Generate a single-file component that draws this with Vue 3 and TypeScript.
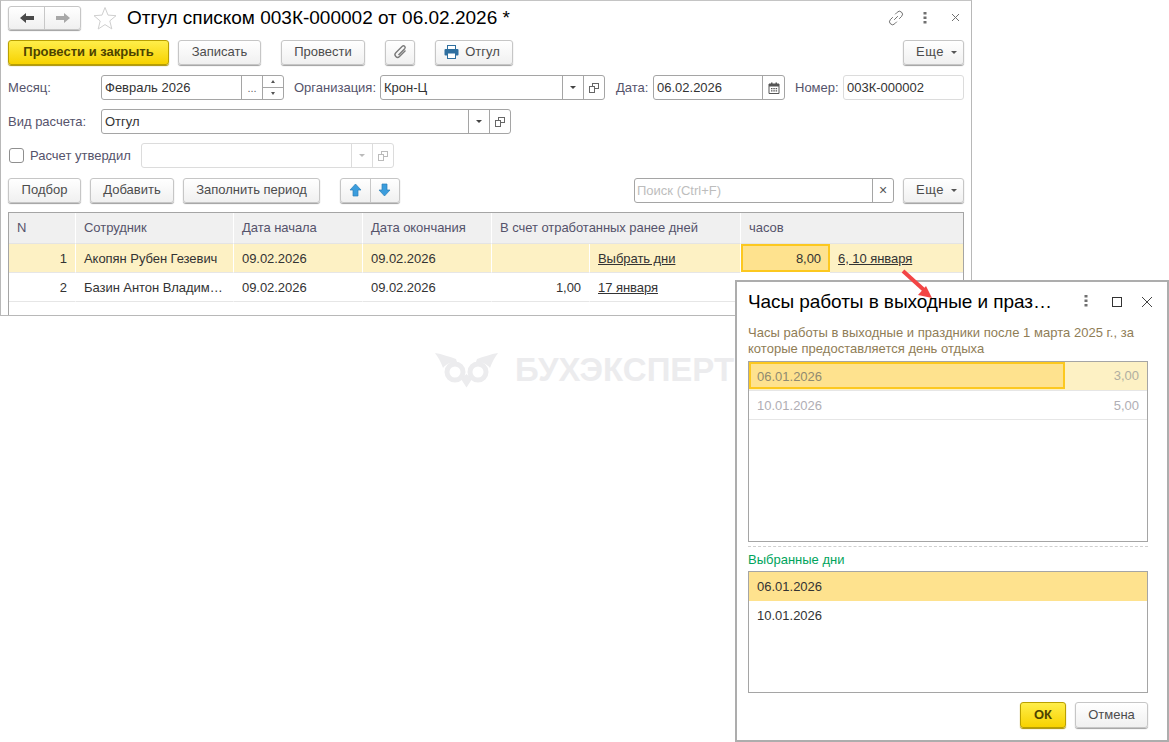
<script setup lang="ts">
const columns = ['N', 'Сотрудник', 'Дата начала', 'Дата окончания']
</script>

<template>
  <div class="page">
    <section class="win">
      <header class="titlebar">
        <div class="btn nav">
          <span class="navcell">
            <svg width="16" height="12" viewBox="0 0 16 12"><path d="M1 6l6-5v3h8v4H7v3z" fill="#4a4a4a" /></svg>
          </span>
          <span class="navcell">
            <svg width="16" height="12" viewBox="0 0 16 12"><path d="M15 6L9 1v3H1v4h8v3z" fill="#a8a8a8" /></svg>
          </span>
        </div>
        <svg class="star" width="24" height="24" viewBox="0 0 24 24"><path d="M12 1.5l3 7.600 8 .6-6.200 5.200 2 8L12 18.600 5.200 23l2-8L1 9.700l8-.6z" fill="#fff" stroke="#cfcfcf" /></svg>
        <h1 class="title">Отгул списком 003К-000002 от 06.02.2026 *</h1>
        <div class="winicons">
          <svg class="ic-link" width="16" height="16" viewBox="0 0 16 16" fill="none" stroke="#707070" stroke-width="1"><path d="M6.200 9.800l3.600-3.600M7.200 4.300l2-2a3 3 0 0 1 4.500 4l-2.500 2.500M8.800 11.700l-2 2a3 3 0 0 1-4.500-4l2.500-2.500" /></svg>
          <svg class="ic-dots" width="4" height="12" viewBox="0 0 4 12" fill="#707070"><rect x="0.500" y="0" width="3" height="2.500" /><rect x="0.500" y="4.500" width="3" height="2.500" /><rect x="0.500" y="9" width="3" height="2.500" /></svg>
          <svg width="9" height="9" viewBox="0 0 9 9" stroke="#707070" fill="none"><path d="M1 1l7 7M8 1L1 8" /></svg>
        </div>
      </header>

      <div class="row toolbar">
        <button class="btn primary w161">Провести и закрыть</button>
        <button class="btn w83 ml9">Записать</button>
        <button class="btn w84 ml20">Провести</button>
        <button class="btn w30 ml20">
          <svg width="16" height="16" viewBox="0 0 16 16" fill="none" stroke="#7a7a7a" stroke-width="1.400"><path d="M13.500 6.500l-6 6a2.600 2.600 0 0 1-3.700-3.700l6.500-6.500a1.700 1.700 0 0 1 2.400 2.400L6.500 11" /></svg>
        </button>
        <button class="btn w78 ml20 gap7">
          <svg width="15" height="14" viewBox="0 0 15 14"><rect x="3.500" y="0.500" width="8" height="4" fill="#fff" stroke="#2f6f9f" /><rect x="0.500" y="4" width="14" height="6.500" rx="1" fill="#2f6f9f" /><rect x="3.500" y="8" width="8" height="5.500" fill="#fff" stroke="#2f6f9f" /></svg>
          <span>Отгул</span>
        </button>
        <button class="btn w61 more push">Еще <i class="caret"></i></button>
      </div>

      <div class="row fields">
        <label class="lbl w93">Месяц:</label>
        <div class="field w183">
          <span class="val">Февраль 2026</span>
          <span class="fb w21 dots">...</span>
          <span class="fb w21 spin"><i class="up"></i><i class="down"></i></span>
        </div>
        <label class="lbl ml10 w86">Организация:</label>
        <div class="field w225">
          <span class="val">Крон-Ц</span>
          <span class="fb w21"><i class="caret dark"></i></span>
          <span class="fb w21"><svg width="10" height="10" viewBox="0 0 10 10" fill="#fff" stroke="#666"><rect x="3.500" y="0.500" width="6" height="5" /><rect x="0.500" y="3.500" width="5" height="6" /></svg></span>
        </div>
        <label class="lbl ml11 w37">Дата:</label>
        <div class="field w132">
          <span class="val">06.02.2026</span>
          <span class="fb w22">
            <svg width="12" height="12" viewBox="0 0 12 12"><path d="M1 2h10v9.500H1z" fill="#fff" stroke="#555" /><path d="M1 2h10v2.500H1zM3 .5h1.500v2H3zM7.500.5H9v2H7.500z" fill="#555" /><path d="M3 6h1.500v1.300H3zM5.300 6h1.500v1.300H5.300zM7.600 6h1.500v1.300H7.600zM3 8.300h1.500v1.300H3zM5.300 8.300h1.500v1.300H5.300zM7.600 8.300h1.500v1.300H7.600z" fill="#555" /></svg>
          </span>
        </div>
        <label class="lbl ml10 w48">Номер:</label>
        <div class="field w121 soft"><span class="val">003К-000002</span></div>
      </div>

      <div class="row fields second">
        <label class="lbl w93">Вид расчета:</label>
        <div class="field w410">
          <span class="val">Отгул</span>
          <span class="fb w21"><i class="caret dark"></i></span>
          <span class="fb w21"><svg width="10" height="10" viewBox="0 0 10 10" fill="#fff" stroke="#666"><rect x="3.500" y="0.500" width="6" height="5" /><rect x="0.500" y="3.500" width="5" height="6" /></svg></span>
        </div>
      </div>

      <div class="row fields second">
        <span class="check"></span>
        <label class="lbl w111">Расчет утвердил</label>
        <div class="field w253 soft">
          <span class="val"></span>
          <span class="fb w21"><i class="caret faded"></i></span>
          <span class="fb w21"><svg width="10" height="10" viewBox="0 0 10 10" fill="#fff" stroke="#bbb"><rect x="3.500" y="0.500" width="6" height="5" /><rect x="0.500" y="3.500" width="5" height="6" /></svg></span>
        </div>
      </div>

      <div class="row actions">
        <button class="btn w73">Подбор</button>
        <button class="btn w84 ml9">Добавить</button>
        <button class="btn w137 ml9">Заполнить период</button>
        <div class="btn arrows ml20">
          <span class="navcell">
            <svg width="13" height="14" viewBox="0 0 13 14"><path d="M6.500 1L12 7H9v6H4V7H1z" fill="#3b9ddd" stroke="#2d7fb8" stroke-width=".7" /></svg>
          </span>
          <span class="navcell">
            <svg width="13" height="14" viewBox="0 0 13 14"><path d="M6.500 13L12 7H9V1H4v6H1z" fill="#3b9ddd" stroke="#2d7fb8" stroke-width=".7" /></svg>
          </span>
        </div>
        <div class="field search">
          <span class="val ph">Поиск (Ctrl+F)</span>
          <span class="fb w21 close">×</span>
        </div>
        <button class="btn w61 more ml9">Еще <i class="caret"></i></button>
      </div>

      <div class="table">
        <div v-for="c in columns" :key="c" class="th">{{ c }}</div>
        <div class="th span2">В счет отработанных ранее дней</div>
        <div class="th span2 end">часов</div>

        <div class="td sel num">1</div>
        <div class="td sel">Акопян Рубен Гезевич</div>
        <div class="td sel date">09.02.2026</div>
        <div class="td sel date">09.02.2026</div>
        <div class="td sel"></div>
        <div class="td sel"><a>Выбрать дни</a></div>
        <div class="td active num">8,00</div>
        <div class="td sel end"><a>6, 10 января</a></div>

        <div class="td num">2</div>
        <div class="td clip">Базин Антон Владим…</div>
        <div class="td date">09.02.2026</div>
        <div class="td date">09.02.2026</div>
        <div class="td num">1,00</div>
        <div class="td"><a>17 января</a></div>
        <div class="td"></div>
        <div class="td end"></div>
      </div>
    </section>

    <div class="mark">
      <svg width="64" height="36" viewBox="0 0 64 36">
        <path d="M0 1c7 1 15 4 21 6l1 3c-6 0-11 2-14 6C6 10 3 5 0 1zM63 1c-7 1-15 4-21 6l-1 3c6 0 11 2 14 6 2-6 5-11 8-15z" fill="#ececee" />
        <circle cx="20" cy="20" r="8" fill="none" stroke="#ececee" stroke-width="5" />
        <circle cx="43" cy="20" r="8" fill="none" stroke="#ececee" stroke-width="5" />
        <path d="M26 27l5.500-5 5.500 5-5.500 8.500z" fill="#ececee" />
      </svg>
      <span>БУХЭКСПЕРТ</span>
    </div>

    <section class="dialog">
      <header class="dhead">
        <h2>Часы работы в выходные и праз…</h2>
        <svg class="i1" width="4" height="12" viewBox="0 0 4 12" fill="#707070"><rect x="0.500" y="0" width="3" height="2.500" /><rect x="0.500" y="4.500" width="3" height="2.500" /><rect x="0.500" y="9" width="3" height="2.500" /></svg>
        <svg class="i2" width="10" height="10" viewBox="0 0 10 10" fill="none" stroke="#333"><rect x="0.500" y="0.500" width="9" height="9" /></svg>
        <svg class="i3" width="12" height="12" viewBox="0 0 12 12" fill="none" stroke="#444"><path d="M1 1l10 10M11 1L1 11" /></svg>
      </header>
      <p class="hint">Часы работы в выходные и праздники после 1 марта 2025 г., за которые предоставляется день отдыха</p>
      <div class="list top">
        <div class="lrow first">
          <span class="cell-sel">06.01.2026</span>
          <span class="amount">3,00</span>
        </div>
        <div class="lrow">
          <span class="cell-plain">10.01.2026</span>
          <span class="amount">5,00</span>
        </div>
      </div>
      <div class="dash"></div>
      <div class="green">Выбранные дни</div>
      <div class="list bottom">
        <div class="brow picked">06.01.2026</div>
        <div class="brow">10.01.2026</div>
      </div>
      <div class="dfoot">
        <button class="btn primary w46">ОК</button>
        <button class="btn w73 ml9">Отмена</button>
      </div>
    </section>

    <svg class="arrow" width="40" height="36" viewBox="0 0 40 36">
      <path d="M4 4l21 19" stroke="#f24545" stroke-width="4" fill="none" />
      <path d="M33 31l-14-3 8-9z" fill="#f24545" />
    </svg>
  </div>
</template>

<style>
html, body { margin: 0; background: #fff; }
</style>

<style scoped>
.page {
  position: relative;
  width: 1169px;
  height: 742px;
  overflow: hidden;
  background: #fff;
  font: 13px/16px "Liberation Sans", Arial, sans-serif;
  color: #4c4c4c;
}
.win {
  width: 972px;
  height: 316px;
  box-sizing: border-box;
  border: 1px solid #b8b8b8;
  border-top-color: #c4c4c4;
  padding: 0 7px;
  background: #fff;
  display: flex;
  flex-direction: column;
}
.titlebar { display: flex; align-items: center; height: 38px; flex: none; padding-bottom: 5px; box-sizing: border-box; }
.btn.nav { width: 73px; height: 24px; align-items: stretch; }
.navcell { flex: 1; display: flex; align-items: center; justify-content: center; }
.navcell + .navcell { border-left: 1px solid #c8c8c8; }
.star { margin-left: 12px; }
.title { margin: 0 0 0 10px; font: 400 19px/24px "Liberation Sans", Arial, sans-serif; color: #000; white-space: nowrap; }
.winicons { margin-left: auto; display: flex; align-items: center; padding-right: 4px; }
.ic-link { margin-right: 19px; }
.ic-dots { margin-right: 24px; }
.row { display: flex; align-items: center; flex: none; }
.toolbar { height: 26px; }
.fields { height: 25px; margin-top: 10px; }
.second { margin-top: 9px; }
.actions { height: 26px; margin-top: 9px; }
.btn {
  box-sizing: border-box;
  height: 25px;
  border: 1px solid #c6c6c6;
  border-radius: 3px;
  background: linear-gradient(#fff, #f0f0f0);
  box-shadow: 0 1px 1px #9f9f9f;
  color: #4c4c4c;
  font: 13px/16px "Liberation Sans", Arial, sans-serif;
  padding: 0;
  display: inline-flex;
  align-items: center;
  justify-content: center;
  flex: none;
}
.primary {
  background: linear-gradient(#ffee4a, #f7d200);
  border-color: #b9a000;
  box-shadow: 0 1px 1px #a99000;
  color: #4d4300;
  font-weight: 700;
}
.more { padding-left: 6px; letter-spacing: .5px; }
.more .caret { margin-left: 7px; }
.w161 { width: 161px; } .w83 { width: 83px; } .w84 { width: 84px; } .w30 { width: 30px; }
.w78 { width: 78px; } .w61 { width: 61px; } .w73 { width: 73px; } .w137 { width: 137px; } .w46 { width: 46px; }
.ml9 { margin-left: 9px; } .ml10 { margin-left: 10px; } .ml11 { margin-left: 11px; } .ml20 { margin-left: 20px; }
.gap7 { gap: 6px; padding-right: 4px; }
.push { margin-left: auto; }
.caret { display: inline-block; width: 0; height: 0; border: 3px solid transparent; border-top: 3px solid #555; border-bottom: 0; margin-left: 5px; }
.caret.dark { margin: 0; border-top-color: #444; }
.caret.faded { margin: 0; border-top-color: #bbb; }
.lbl { color: #55536b; flex: none; }
.w93 { width: 93px; } .w86 { width: 86px; } .w37 { width: 37px; } .w48 { width: 48px; } .w111 { width: 111px; }
.field {
  box-sizing: border-box;
  height: 25px;
  border: 1px solid #a5a5a5;
  border-radius: 3px;
  display: flex;
  align-items: stretch;
  flex: none;
  background: #fff;
}
.soft { border-color: #dcdcdc; }
.val { flex: 1; padding-left: 3px; line-height: 23px; color: #333; white-space: nowrap; }
.ph { color: #bdbdbd; padding-left: 2px; }
.fb { flex: none; border-left: 1px solid #a5a5a5; display: flex; align-items: center; justify-content: center; box-sizing: border-box; }
.soft .fb { border-left-color: #dcdcdc; }
.w21 { width: 21px; } .w22 { width: 22px; }
.w183 { width: 183px; } .w225 { width: 225px; } .w132 { width: 132px; } .w121 { width: 121px; } .w410 { width: 410px; } .w253 { width: 253px; }
.dots { font-size: 11px; color: #666; }
.spin { flex-direction: column; }
.spin i { flex: 1; width: 100%; display: flex; align-items: center; justify-content: center; box-sizing: border-box; }
.spin .down { border-top: 1px solid #a5a5a5; }
.spin i::after { content: ""; width: 0; height: 0; border: 2px solid transparent; }
.up::after { border-bottom: 3px solid #555 !important; border-top: 0 !important; }
.down::after { border-top: 3px solid #555 !important; border-bottom: 0 !important; }
.check { box-sizing: border-box; width: 15px; height: 15px; border: 1px solid #8f8f8f; border-radius: 3px; margin: 0 6px 0 1px; flex: none; }
.btn.arrows { width: 60px; align-items: stretch; }
.search { width: 260px; margin-left: auto; }
.close { font-size: 14px; color: #555; }
.table {
  margin-top: 9px;
  display: grid;
  grid-template-columns: 67px 158px 129px 129px 98px 151px 89px 133px;
  grid-template-rows: 31px 29px 29px 13px;
  border: 1px solid #a5a5a5;
  border-bottom: 0;
  flex: none;
  letter-spacing: -.05px;
}
.th {
  background: #f0f0f0;
  border-right: 1px solid #fff;
  border-bottom: 1px solid #e4e4e4;
  padding: 0 8px;
  line-height: 30px;
  color: #55536b;
  box-sizing: border-box;
}
.span2 { grid-column: span 2; }
.end { border-right: 0 !important; }
.td {
  box-sizing: border-box;
  border-right: 1px solid transparent;
  border-bottom: 1px solid #e6e6e6;
  padding: 0 8px;
  line-height: 29px;
  color: #333;
  white-space: nowrap;
  overflow: hidden;
}
.td.sel { background: #fdf1c4; border-right-color: #fff; }
.td.end { border-right: 0; }
.num { text-align: right; }
.td a { text-decoration: underline; color: #333; }
.td.active {
  background: #fee28e;
  border: 2px solid #fcc81f;
  line-height: 26px;
  padding: 0 7px;
  margin-bottom: 1px;
}
.mark {
  position: absolute;
  left: 435px;
  top: 352px;
  width: 300px;
  display: flex;
  align-items: center;
  gap: 16px;
  color: #ececee;
  font: 700 33px/36px "Liberation Sans", Arial, sans-serif;
  white-space: nowrap;
}
.dialog {
  position: absolute;
  left: 735px;
  top: 280px;
  width: 434px;
  height: 462px;
  box-sizing: border-box;
  border: 2px solid #adadad;
  background: #fff;
  padding: 0 19px 0 11px;
  display: flex;
  flex-direction: column;
}
.dhead { height: 42px; padding-bottom: 2px; box-sizing: border-box; display: flex; align-items: center; flex: none; position: relative; }
.dhead h2 { margin: 0; font: 400 19px/24px "Liberation Sans", Arial, sans-serif; letter-spacing: -.07px; color: #000; white-space: nowrap; }
.i1, .i2, .i3 { position: absolute; }
.i1 { left: 336px; top: 13px; } .i2 { left: 364px; top: 15px; } .i3 { left: 393px; top: 14px; }
.hint { margin: 0; font-size: 13px; line-height: 16px; letter-spacing: .03px; color: #8f7d56; height: 35px; padding-top: 1px; box-sizing: border-box; flex: none; }
.list { box-sizing: border-box; border: 1px solid #a5a5a5; flex: none; }
.top { height: 181px; margin-top: 2px; }
.bottom { height: 122px; }
.lrow { height: 29px; display: flex; align-items: stretch; border-bottom: 1px solid #e6e6e6; box-sizing: border-box; color: #b0aeb4; line-height: 25px; }
.first { background: #fdf1c4; color: #8f8a70; }
.cell-sel { box-sizing: border-box; width: 316px; height: 27px; background: #fee28e; border: 2px solid #fcc81f; padding-left: 6px; flex: none; }
.cell-plain { width: 316px; padding-left: 8px; box-sizing: border-box; line-height: 29px; flex: none; }
.amount { flex: 1; text-align: right; padding-right: 8px; line-height: 29px; }
.first .amount { color: #b0aea0; line-height: 28px; }
.dash { height: 0; border-top: 1px dashed #cfcfcf; margin-top: 4px; flex: none; }
.green { color: #00a45c; height: 24px; line-height: 25px; flex: none; }
.brow { height: 29px; line-height: 30px; padding-left: 8px; color: #333; }
.picked { background: #fee28e; }
.dfoot { display: flex; justify-content: flex-end; margin-top: 9px; }
.dfoot .btn { height: 26px; }
.arrow { position: absolute; left: 899px; top: 267px; }
</style>
